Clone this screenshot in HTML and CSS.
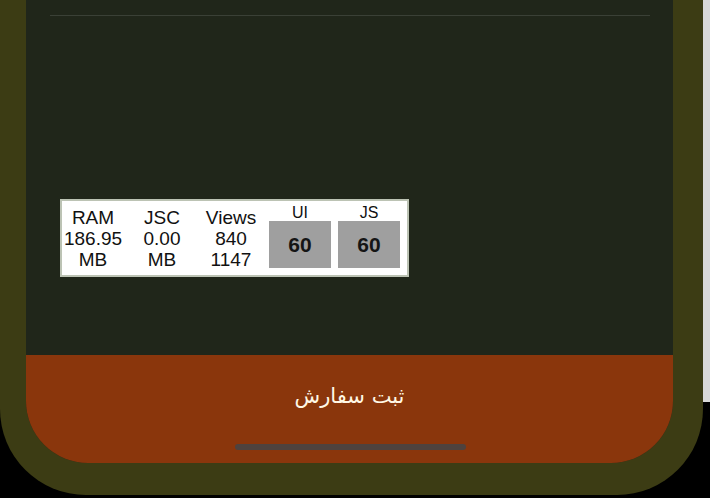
FILE: index.html
```html
<!DOCTYPE html>
<html lang="fa">
<head>
<meta charset="utf-8">
<title>Order</title>
<link rel="stylesheet" href="styles.css">
</head>
<body>
<div class="device">
  <div class="screen">
    <div class="divider"></div>
    <div class="content">
      <div class="perf">
        <div class="col">
          <div>RAM</div>
          <div>186.95</div>
          <div>MB</div>
        </div>
        <div class="col">
          <div>JSC</div>
          <div>0.00</div>
          <div>MB</div>
        </div>
        <div class="col">
          <div>Views</div>
          <div>840</div>
          <div>1147</div>
        </div>
        <div class="fps">
          <div class="fps-label">UI</div>
          <div class="fps-box">60</div>
        </div>
        <div class="fps">
          <div class="fps-label">JS</div>
          <div class="fps-box">60</div>
        </div>
      </div>
    </div>
    <div class="submit">
      <span class="submit-label" dir="rtl">ثبت سفارش</span>
      <div class="home-indicator"></div>
    </div>
  </div>
</div>
<div class="scroll-strip"></div>
</body>
</html>
```
FILE: styles.css
```css
html, body {
  margin: 0;
  padding: 0;
  background: #000;
}
body {
  display: flex;
  align-items: flex-start;
  width: 710px;
  height: 498px;
  overflow: hidden;
  font-family: "Liberation Sans", Arial, sans-serif;
}
.device {
  width: 703px;
  height: 495px;
  box-sizing: border-box;
  padding: 0 30px 32px 26px;
  background: #3c3c14;
  border-radius: 0 0 86px 86px;
  flex: none;
}
.screen {
  position: relative;
  height: 100%;
  display: flex;
  flex-direction: column;
  background: #20261a;
  border-radius: 0 0 62px 62px;
  overflow: hidden;
}
.divider {
  height: 1px;
  margin: 15px 23px 0 24px;
  background: #3a4036;
}
.content {
  flex: 1;
  padding: 183px 0 0 34px;
}
.perf {
  display: inline-flex;
  gap: 7px;
  background: #fff;
  border: 2px solid #bcc3b4;
  padding: 6px 7px 5px 0;
  color: #111;
}
.col {
  width: 62px;
  text-align: center;
  font-size: 19px;
  line-height: 21px;
}
.fps {
  width: 62px;
  display: flex;
  flex-direction: column;
  align-items: center;
}
.fps-label {
  margin-top: -2px;
  font-size: 16px;
  line-height: 16px;
  height: 16px;
}
.fps-box {
  width: 62px;
  height: 47px;
  background: #9f9f9f;
  display: flex;
  align-items: center;
  justify-content: center;
  font-size: 21px;
  font-weight: bold;
  color: #151515;
}
.submit {
  position: relative;
  height: 108px;
  background: #8a360c;
  display: flex;
  flex-direction: column;
  align-items: center;
  flex: none;
}
.submit-label {
  margin-top: 27px;
  font-family: "DejaVu Sans", sans-serif;
  font-size: 21px;
  line-height: 28px;
  color: #fff8e6;
}
.home-indicator {
  position: absolute;
  left: 209px;
  bottom: 13px;
  width: 231px;
  height: 6px;
  border-radius: 3px;
  background: #4e423e;
}
.scroll-strip {
  width: 7px;
  height: 402px;
  background: #d9d9d9;
  flex: none;
}
```
